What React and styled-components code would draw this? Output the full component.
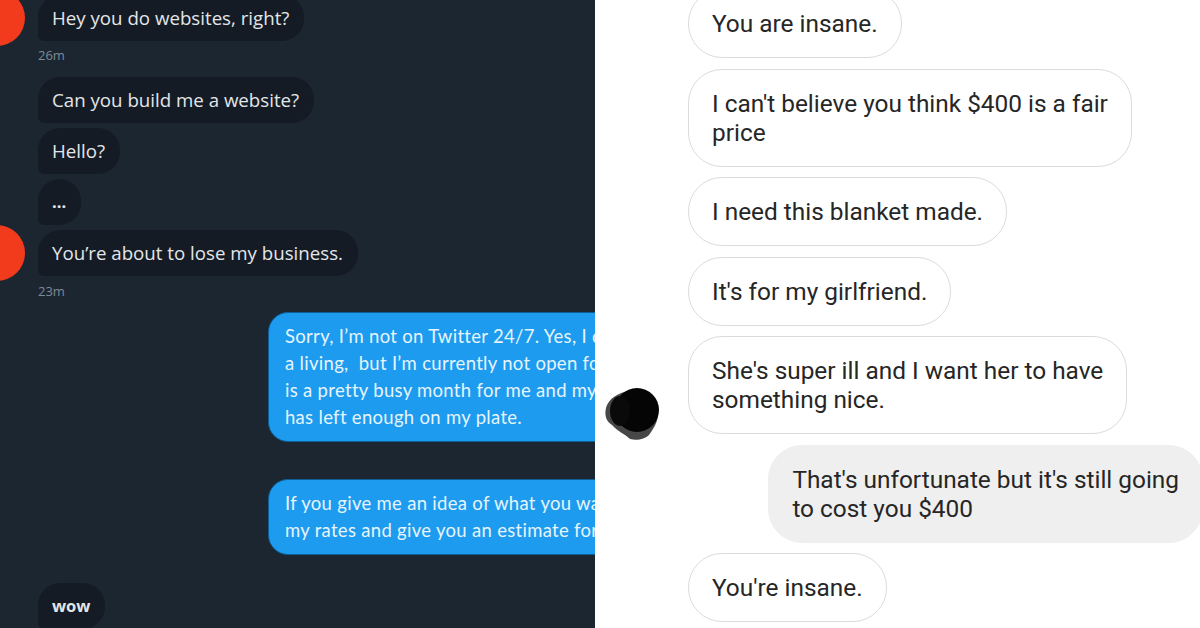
import React from 'react';
import styled, {createGlobalStyle} from 'styled-components';

const GlobalStyle = createGlobalStyle`
  html, body {
    margin: 0;
    padding: 0;
    background: #fff;
  }
`;

const Page = styled.div`
  display: grid;
  grid-template-columns: 595px 605px;
  width: 1200px;
  height: 628px;
  overflow: hidden;
`;

// left half: dark twitter DMs
const DarkPane = styled.div`
  background: #1c2631;
  overflow: hidden;
  font-family: "Open Sans", "Noto Sans", sans-serif;
`;

const DarkList = styled.div`
  display: flex;
  flex-direction: column;
  margin-top: -5px;
`;

const Row = styled.div`
  display: flex;
  align-items: center;
  margin-top: ${({top}) => top || 0}px;
`;

const AvatarSlot = styled.div`
  width: 38px;
  height: 46px;
  flex-shrink: 0;
  display: flex;
  align-items: center;
`;

const RedDot = styled.div`
  width: 56px;
  height: 56px;
  margin-left: -31px;
  flex-shrink: 0;
  border-radius: 50%;
  background: #f23a1d;
`;

const DarkBubble = styled.div`
  height: 46px;
  padding: 0 15px 0 14px;
  background: #141b24;
  color: #e3e6e9;
  font-size: ${({small}) => small ? 16.5 : 18.7}px;
  line-height: 46px;
  font-weight: ${({bold}) => bold ? 700 : 400};
  border-radius: 22px 22px 22px 6px;
  white-space: nowrap;
`;

const Stamp = styled.div`
  margin: ${({top}) => top}px 0 0 38px;
  font-size: 13px;
  line-height: 16px;
  color: #7d8a97;
`;

const BlueRow = styled.div`
  display: flex;
  margin-top: ${({top}) => top}px;
  padding-left: 268px;
`;

const BlueBubble = styled.div`
  padding: 10px 16px;
  background: #1d9bef;
  border: 1px solid #0d5e96;
  border-radius: 20px;
  color: #e6f4fd;
  font-family: Lato, "Open Sans", sans-serif;
  font-size: 18.5px;
  letter-spacing: 0.3px;
  line-height: 27px;
  white-space: pre;
`;

// right half: light instagram chat
const LightPane = styled.div`
  background: #fff;
  overflow: hidden;
  padding-left: 8px;
  font-family: Roboto, "Liberation Sans", sans-serif;
`;

const LightList = styled.div`
  display: flex;
  flex-direction: column;
  gap: 10.5px;
  margin-top: -11px;
`;

const InRow = styled.div`
  display: flex;
  align-items: flex-end;
  gap: 28px;
`;

const OutRow = styled.div`
  display: flex;
  justify-content: flex-end;
  margin-right: -3px;
`;

const FaceSlot = styled.div`
  width: 57px;
  height: 57px;
  flex-shrink: 0;
  margin-bottom: -6px;
`;

const LightBubble = styled.div`
  padding: 19px 23px;
  border: 1px solid ${({out}) => out ? '#efefef' : '#dbdbdb'};
  background: ${({out}) => out ? '#efefef' : '#fff'};
  border-radius: 34px;
  color: #262626;
  font-size: 24.4px;
  line-height: 29px;
  white-space: nowrap;
`;

const Face = () => (
  <svg width="57" height="57" viewBox="0 0 57 57">
    <path d="M4 22 C1 30 2 38 9 42 C14 48 22 51 27 56 C34 58 42 56 46 52 C50 46 55 40 55 30 C54 20 46 10 34 8 C22 7 9 12 4 22 Z" fill="#474747" />
    <circle cx="34" cy="27" r="22" fill="#050505" />
    <ellipse cx="17" cy="28" rx="10" ry="15" fill="#0a0a0a" />
  </svg>
);

const darkMessages = [
  {text: "Hey you do websites, right?", avatar: true},
  {text: "26m", stamp: 6},
  {text: "Can you build me a website?", top: 14},
  {text: "Hello?", top: 5},
  {text: "...", top: 5, bold: true, small: true},
  {text: "You\u2019re about to lose my business.", top: 5, avatar: true},
  {text: "23m", stamp: 7},
];

const blueMessages = [
  {
    top: 13,
    lines: [
      "Sorry, I\u2019m not on Twitter 24/7. Yes, I do this for",
      "a living,  but I\u2019m currently not open for new projects. This",
      "is a pretty busy month for me and my current work",
      "has left enough on my plate.",
    ],
  },
  {
    top: 37,
    lines: [
      "If you give me an idea of what you want, I can send you",
      "my rates and give you an estimate for the work.",
    ],
  },
];

const lightMessages = [
  {lines: ["You are insane."]},
  {lines: ["I can't believe you think $400 is a fair", "price"]},
  {lines: ["I need this blanket made."]},
  {lines: ["It's for my girlfriend."]},
  {lines: ["She's super ill and I want her to have", "something nice."], face: true},
  {lines: ["That's unfortunate but it's still going", "to cost you $400"], out: true},
  {lines: ["You're insane."]},
];

const renderLines = (lines) => lines.map((line, i) => (
  <React.Fragment key={i}>
    {i > 0 && <br />}
    {line}
  </React.Fragment>
));

const App = () => {
  return (
    <>
      <GlobalStyle />
      <Page>
        <DarkPane>
          <DarkList>
            {darkMessages.map((item, index) => item.stamp ? (
              <Stamp key={index} top={item.stamp}>{item.text}</Stamp>
            ) : (
              <Row key={index} top={item.top}>
                <AvatarSlot>{item.avatar && <RedDot />}</AvatarSlot>
                <DarkBubble bold={item.bold} small={item.small}>{item.text}</DarkBubble>
              </Row>
            ))}
            {blueMessages.map((item, index) => (
              <BlueRow key={index} top={item.top}>
                <BlueBubble>{renderLines(item.lines)}</BlueBubble>
              </BlueRow>
            ))}
            <Row top={28}>
              <AvatarSlot />
              <DarkBubble bold small>wow</DarkBubble>
            </Row>
          </DarkList>
        </DarkPane>

        <LightPane>
          <LightList>
            {lightMessages.map((item, index) => item.out ? (
              <OutRow key={index}>
                <LightBubble out>{renderLines(item.lines)}</LightBubble>
              </OutRow>
            ) : (
              <InRow key={index}>
                <FaceSlot>{item.face && <Face />}</FaceSlot>
                <LightBubble>{renderLines(item.lines)}</LightBubble>
              </InRow>
            ))}
          </LightList>
        </LightPane>
      </Page>
    </>
  );
};

export default App;
